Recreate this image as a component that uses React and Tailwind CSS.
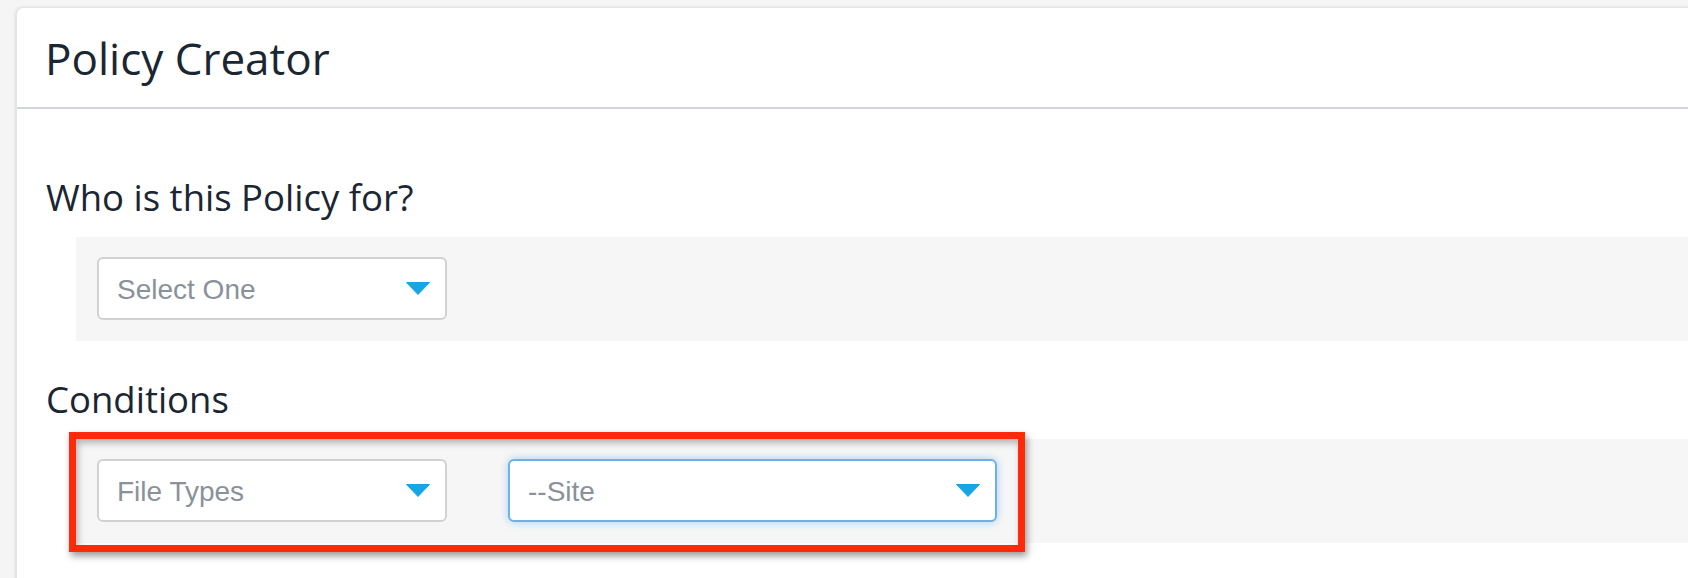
import React from "react";

function Caret() {
  return (
    <svg width="24" height="13" viewBox="0 0 24 13" className="shrink-0">
      <polygon points="0.5,0.5 23.5,0.5 12,12.5" fill="#16a6e4" stroke="#16a6e4" strokeWidth="1" strokeLinejoin="round" />
    </svg>
  );
}

function Select({ label, width, focus }) {
  return (
    <div
      className={
        "flex h-[63px] items-center justify-between rounded-[6px] border-2 bg-white pl-[18px] pr-[15px] " +
        (focus
          ? "border-[#6cb2ea] shadow-[0_0_8px_rgba(102,175,233,0.55)]"
          : "border-[#cfd1d3]")
      }
      style={{ width }}
    >
      <span className="pt-[2px] text-[28px] leading-none text-[#89929a] [font-family:'Liberation_Sans',Arial,sans-serif]">
        {label}
      </span>
      <Caret />
    </div>
  );
}

export default function App() {
  return (
    <div className="relative h-[578px] w-[1688px] overflow-hidden bg-[#f5f5f5] pl-[15px] pt-[7px] [font-family:'Open_Sans',sans-serif]">
      <div className="h-[600px] w-[1720px] rounded-tl-[8px] border-l-2 border-t border-[#e3e6e9] bg-white shadow-[0_0_3px_rgba(0,0,0,0.10)]">
        <div className="flex h-[101px] items-center border-b-2 border-[#d2d6da] pl-[28px]">
          <h1 className="text-[44px] leading-[60px] text-[#1b2633]">Policy Creator</h1>
        </div>
        <div className="pl-[29px] pt-[62px]">
          <h2 className="text-[36.5px] leading-[52px] text-[#1b2633]">Who is this Policy for?</h2>
          <div className="mt-[14px] ml-[30px] h-[104px] bg-[#f6f6f6] pl-[21px] pt-[20px]">
            <Select label="Select One" width={350} />
          </div>
          <h2 className="mt-[32px] text-[36.5px] leading-[52px] text-[#1b2633]">Conditions</h2>
          <div className="mt-[14px] ml-[30px] flex h-[104px] gap-[61px] bg-[#f6f6f6] pl-[21px] pt-[20px]">
            <Select label="File Types" width={350} />
            <Select label="--Site" width={489} focus />
          </div>
        </div>
      </div>
      <div className="pointer-events-none absolute left-[69px] top-[432px] h-[120px] w-[956px] border-[7px] border-[#ff2a0a] shadow-[2px_4px_7px_rgba(0,0,0,0.4),inset_2px_4px_7px_rgba(0,0,0,0.28)]" />
    </div>
  );
}
